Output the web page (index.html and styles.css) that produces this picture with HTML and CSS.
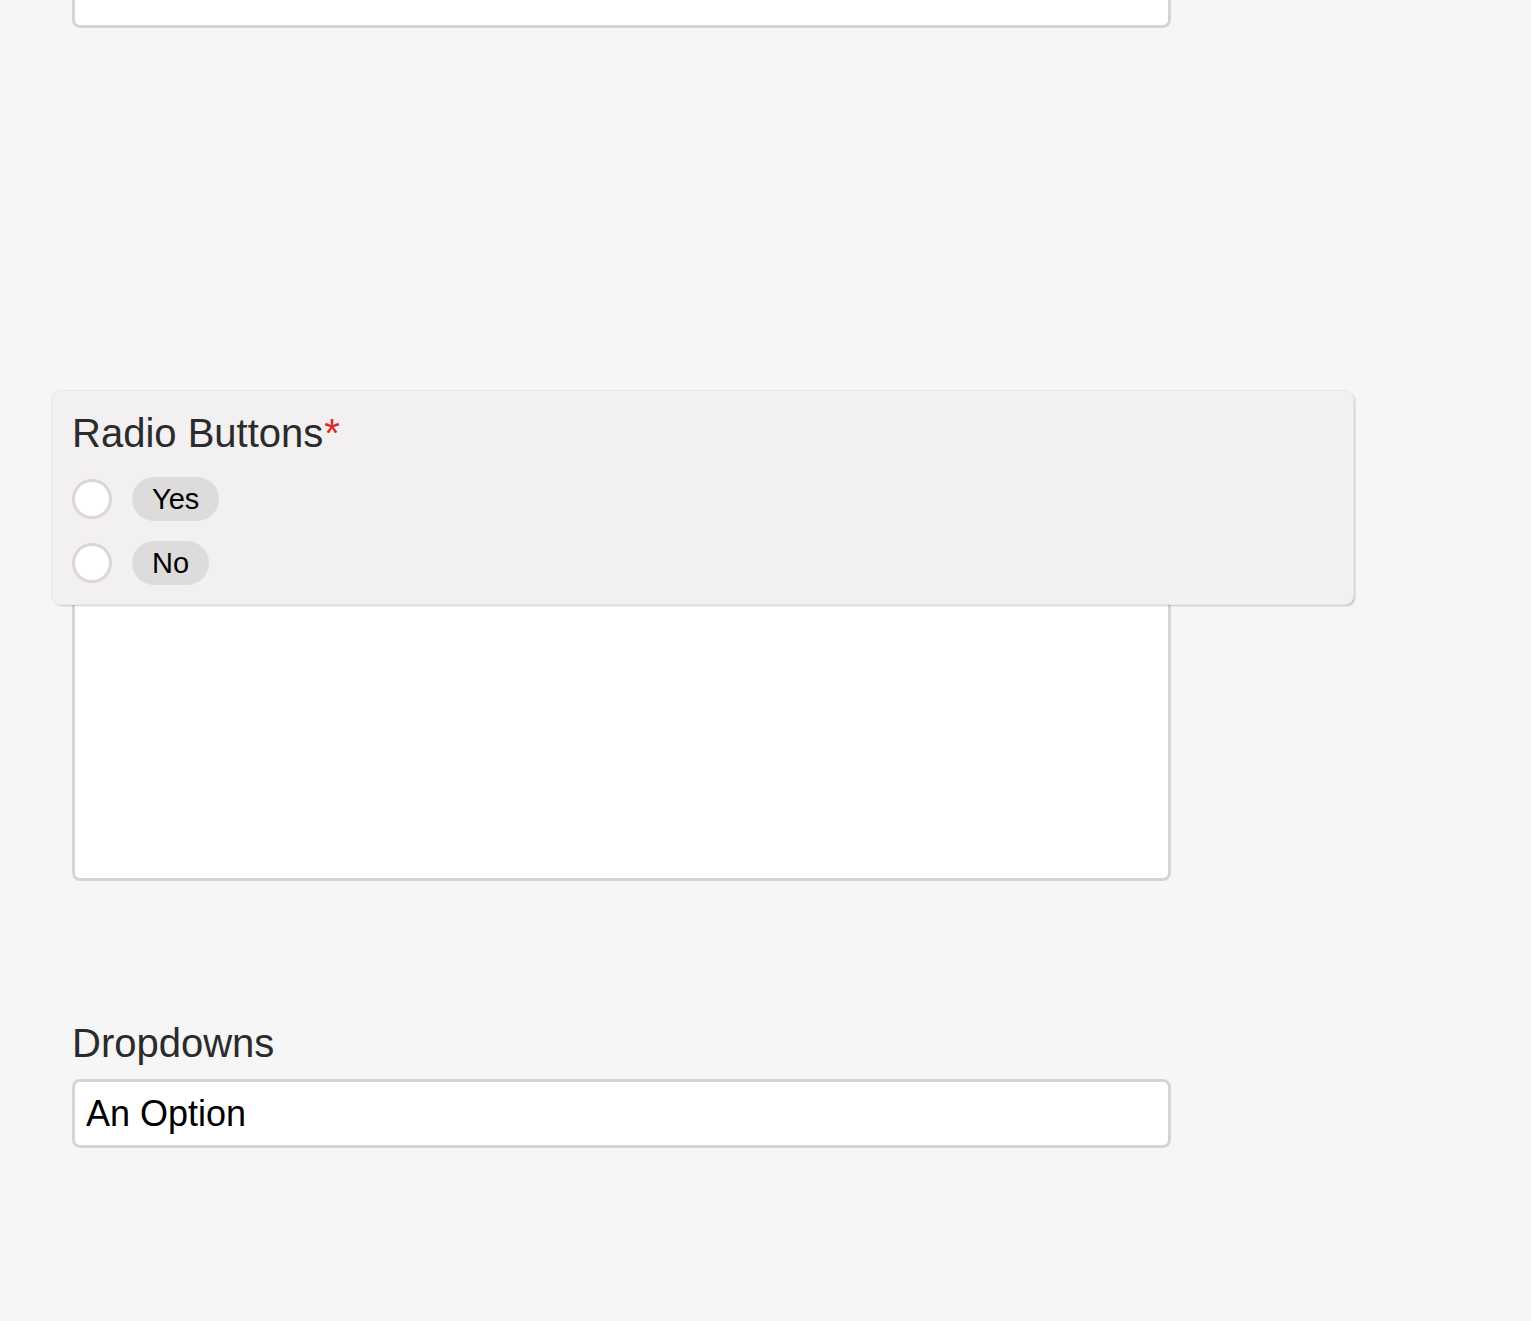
FILE: index.html
```html
<!DOCTYPE html>
<html lang="en">
<head>
<meta charset="utf-8">
<title>Form builder</title>
<link rel="stylesheet" href="styles.css">
</head>
<body>
<div class="form">
  <div class="field field-top">
    <div class="box top-box"></div>
  </div>
  <div class="field field-text">
    <div class="box textarea"></div>
  </div>
  <div class="field field-dropdown">
    <div class="label">Dropdowns</div>
    <div class="box select">An Option</div>
  </div>

  <div class="drag-panel">
    <div class="label">Radio Buttons<span class="req">*</span></div>
    <div class="options">
      <div class="option">
        <span class="radio"></span>
        <span class="pill">Yes</span>
      </div>
      <div class="option">
        <span class="radio"></span>
        <span class="pill">No</span>
      </div>
    </div>
  </div>
</div>
</body>
</html>
```

FILE: styles.css
```css
html, body {
  margin: 0;
  padding: 0;
  background: #f6f6f6;
  font-family: "Liberation Sans", Arial, Helvetica, sans-serif;
}

.form {
  position: relative;
  width: 1099px;
  padding-left: 72px;
  min-height: 1321px;
}

.box {
  box-sizing: border-box;
  background: #ffffff;
  border: 3px solid #d9d4d4;
  border-radius: 8px;
}

.top-box {
  height: 28px;
  border-top: none;
  border-radius: 0 0 8px 8px;
}

.field-text {
  margin-top: 472px;
}

.textarea {
  height: 381px;
}

.field-dropdown {
  margin-top: 139px;
}

.label {
  font-size: 40px;
  line-height: 46px;
  color: #2b2b2b;
}

.field-dropdown .label {
  margin-bottom: 13px;
}

.select {
  height: 69px;
  display: flex;
  align-items: center;
  padding-left: 11px;
  font-size: 36px;
  color: #000;
}

.req {
  color: #e0291f;
  margin-left: 1px;
}

.drag-panel {
  position: absolute;
  top: 391px;
  left: 52px;
  width: 1301px;
  box-sizing: border-box;
  padding: 19px 20px 19px 20px;
  background: #f2f0f1;
  border-radius: 8px;
  box-shadow: 0 0 0 1px #e9e7e7, 2px 2px 2px rgba(0, 0, 0, 0.2);
}

.options {
  margin-top: 21px;
  display: flex;
  flex-direction: column;
  gap: 20px;
}

.option {
  display: flex;
  align-items: center;
  gap: 20px;
  height: 44px;
}

.radio {
  box-sizing: border-box;
  width: 40px;
  height: 40px;
  border-radius: 50%;
  background: #ffffff;
  border: 3px solid #dcd6d6;
}

.pill {
  height: 44px;
  line-height: 44px;
  padding: 0 20px;
  border-radius: 22px;
  background: #dedbdc;
  font-size: 29px;
  color: #000;
}
```
